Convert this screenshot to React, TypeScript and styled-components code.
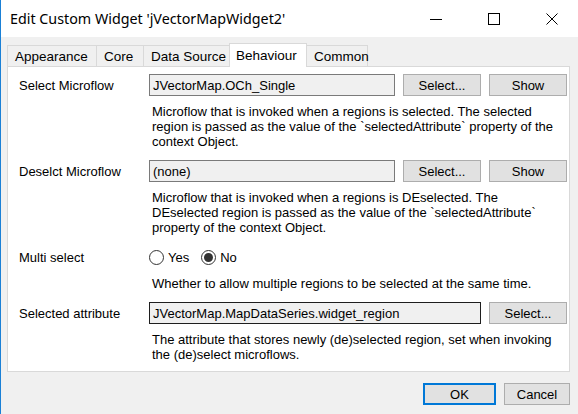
import React from "react";
import styled, { createGlobalStyle } from "styled-components";

const GlobalStyle = createGlobalStyle`
  html, body { margin: 0; padding: 0; background: #f0f0f0; }
  * { box-sizing: border-box; }
`;

const Window = styled.div`
  width: 578px;
  height: 414px;
  background: #f0f0f0;
  border-left: 1px solid #1a80d6;
  display: flex;
  flex-direction: column;
  overflow: hidden;
  font-family: "Liberation Sans", Arial, sans-serif;
  font-size: 13px;
  color: #000;
`;

const TitleBar = styled.div`
  height: 37px;
  background: #fff;
  display: flex;
  align-items: center;
  flex-shrink: 0;
`;

const Title = styled.div`
  flex: 1;
  padding-left: 9px;
  font-family: "Noto Sans", "Open Sans", sans-serif;
  font-size: 14.3px;
  color: #000;
  white-space: nowrap;
`;

const Controls = styled.div`
  display: flex;
  height: 100%;
  margin-right: -3px;
`;

const ControlButton = styled.div`
  width: 58px;
  height: 100%;
  display: flex;
  align-items: center;
  justify-content: center;
`;

const Body = styled.div`
  flex: 1;
  display: flex;
  flex-direction: column;
  padding: 6px 0 0 6px;
`;

const TabStrip = styled.div`
  display: flex;
  align-items: flex-end;
  height: 24px;
  position: relative;
  z-index: 1;
  margin-bottom: -1px;
`;

const Tab = styled.div<{ $active?: boolean; $w: number }>`
  width: ${(p) => p.$w}px;
  height: ${(p) => (p.$active ? 24 : 22)}px;
  margin-left: -1px;
  &:first-child { margin-left: 0; }
  border: 1px solid #d9d9d9;
  border-bottom: ${(p) => (p.$active ? "none" : "1px solid #d9d9d9")};
  background: ${(p) => (p.$active ? "#fff" : "#f0f0f0")};
  display: flex;
  align-items: ${(p) => (p.$active ? "flex-start" : "center")};
  padding: ${(p) => (p.$active ? "4px 0 0 6px" : "1px 0 0 7px")};
  white-space: nowrap;
  font-size: 13.5px;
`;

const Panel = styled.div`
  width: 563px;
  height: 306px;
  background: #fff;
  border: 1px solid #d9d9d9;
  padding: 7px 2px 0 11px;
  display: flex;
  flex-direction: column;
`;

const Property = styled.div`
  display: grid;
  grid-template-columns: 130px 1fr;
  grid-template-rows: 22px auto;
`;

const Label = styled.div`
  align-self: center;
  white-space: nowrap;
`;

const Fields = styled.div`
  display: flex;
  align-items: center;
  gap: 8px;
`;

const TextBox = styled.div<{ $dark?: boolean }>`
  flex: 1;
  height: 22px;
  background: #f0f0f0;
  border: 1px solid ${(p) => (p.$dark ? "#1e1e1e" : "#7a7a7a")};
  padding: 0 3px;
  display: flex;
  align-items: center;
  white-space: nowrap;
  overflow: hidden;
`;

const Button = styled.div<{ $w?: number; $default?: boolean }>`
  width: ${(p) => p.$w ?? 78}px;
  height: 22px;
  background: #e1e1e1;
  border: ${(p) => (p.$default ? "2px solid #0078d7" : "1px solid #adadad")};
  display: flex;
  align-items: center;
  justify-content: center;
  flex-shrink: 0;
`;

const Description = styled.div`
  grid-column: 2;
  padding-left: 3px;
  margin: 8px 0 11px;
  line-height: 15px;
`;

const RadioGroup = styled.div`
  display: flex;
  align-items: center;
  height: 22px;
`;

const RadioOption = styled.label`
  display: flex;
  align-items: center;
  gap: 4px;
  margin-right: 12px;
`;

const RadioCircle = styled.span<{ $checked?: boolean }>`
  width: 15px;
  height: 15px;
  border-radius: 50%;
  border: 1px solid #333;
  background: #fff;
  display: flex;
  align-items: center;
  justify-content: center;
  &::after {
    content: "";
    width: 9px;
    height: 9px;
    border-radius: 50%;
    background: ${(p) => (p.$checked ? "#333" : "transparent")};
  }
`;

const Footer = styled.div`
  display: flex;
  justify-content: flex-end;
  gap: 8px;
  margin-top: 11px;
  width: 563px;
`;

const tabs = [
  { name: "Appearance", w: 90 },
  { name: "Core", w: 48 },
  { name: "Data Source", w: 87 },
  { name: "Behaviour", w: 78, active: true },
  { name: "Common", w: 62 },
];

export default function App() {
  return (
    <>
      <GlobalStyle />
      <Window>
        <TitleBar>
          <Title>Edit Custom Widget 'jVectorMapWidget2'</Title>
          <Controls>
            <ControlButton>
              <svg width="12" height="12" viewBox="0 0 12 12">
                <line x1="0" y1="6.5" x2="12" y2="6.5" stroke="#000" strokeWidth="1" />
              </svg>
            </ControlButton>
            <ControlButton>
              <svg width="12" height="12" viewBox="0 0 12 12">
                <rect x="0.5" y="0.5" width="11" height="11" fill="none" stroke="#000" strokeWidth="1" />
              </svg>
            </ControlButton>
            <ControlButton>
              <svg width="12" height="12" viewBox="0 0 12 12">
                <path d="M0.5 0.5 L11.5 11.5 M11.5 0.5 L0.5 11.5" stroke="#000" strokeWidth="1" />
              </svg>
            </ControlButton>
          </Controls>
        </TitleBar>
        <Body>
          <TabStrip>
            {tabs.map((t) => (
              <Tab key={t.name} $w={t.w} $active={t.active}>
                {t.name}
              </Tab>
            ))}
          </TabStrip>
          <Panel>
            <Property>
              <Label>Select Microflow</Label>
              <Fields>
                <TextBox>JVectorMap.OCh_Single</TextBox>
                <Button>Select...</Button>
                <Button>Show</Button>
              </Fields>
              <Description>
                Microflow that is invoked when a regions is selected. The selected
                <br />
                region is passed as the value of the `selectedAttribute` property of the
                <br />
                context Object.
              </Description>
            </Property>
            <Property>
              <Label>Deselct Microflow</Label>
              <Fields>
                <TextBox>(none)</TextBox>
                <Button>Select...</Button>
                <Button>Show</Button>
              </Fields>
              <Description>
                Microflow that is invoked when a regions is DEselected. The
                <br />
                DEselected region is passed as the value of the `selectedAttribute`
                <br />
                property of the context Object.
              </Description>
            </Property>
            <Property>
              <Label>Multi select</Label>
              <RadioGroup>
                <RadioOption>
                  <RadioCircle />
                  Yes
                </RadioOption>
                <RadioOption>
                  <RadioCircle $checked />
                  No
                </RadioOption>
              </RadioGroup>
              <Description>
                Whether to allow multiple regions to be selected at the same time.
              </Description>
            </Property>
            <Property>
              <Label>Selected attribute</Label>
              <Fields>
                <TextBox $dark>JVectorMap.MapDataSeries.widget_region</TextBox>
                <Button>Select...</Button>
              </Fields>
              <Description>
                The attribute that stores newly (de)selected region, set when invoking
                <br />
                the (de)select microflows.
              </Description>
            </Property>
          </Panel>
          <Footer>
            <Button $w={73} $default>OK</Button>
            <Button $w={66}>Cancel</Button>
          </Footer>
        </Body>
      </Window>
    </>
  );
}
